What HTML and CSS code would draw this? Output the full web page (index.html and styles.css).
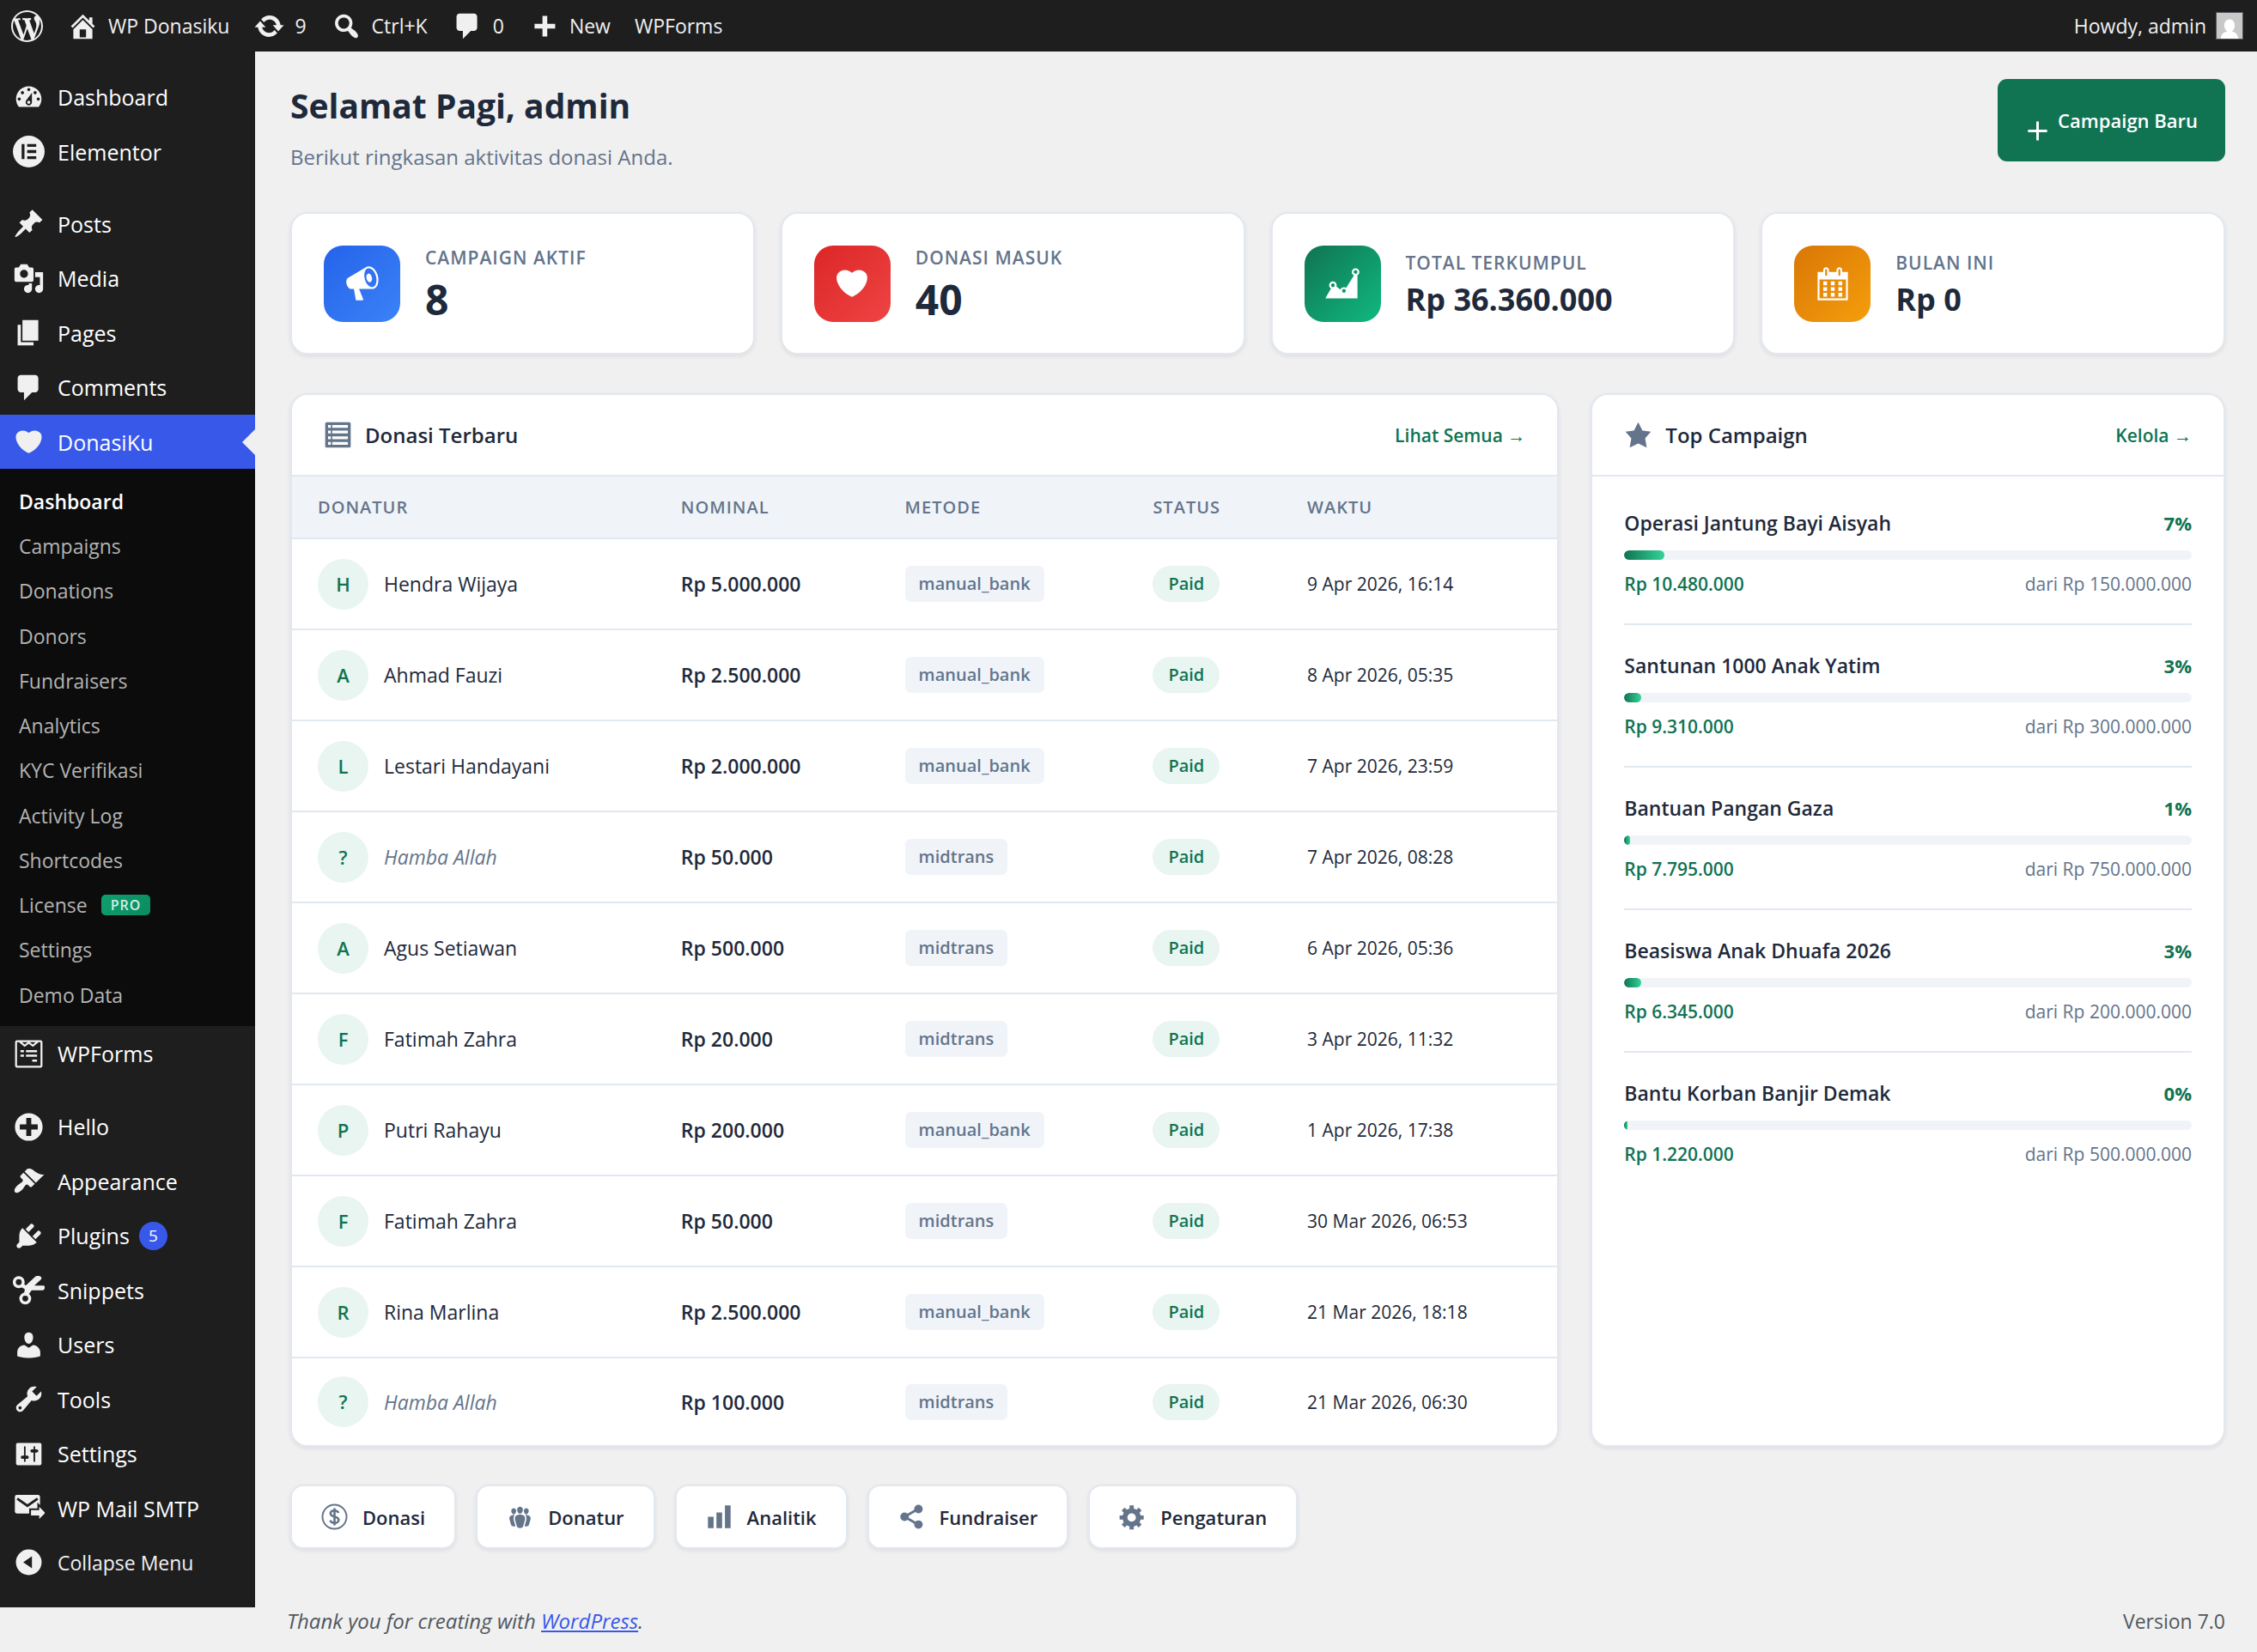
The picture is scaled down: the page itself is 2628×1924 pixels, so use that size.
FILE: index.html
```html
<!DOCTYPE html>
<html lang="id">
<head>
<meta charset="utf-8">
<title>DonasiKu Dashboard</title>
<link rel="stylesheet" href="styles.css">
</head>
<body>

<svg class="sprite" aria-hidden="true">
    <symbol id="i-wordpress" viewBox="0 0 20 20"><path d="M20 10c0-5.51-4.49-10-10-10C4.48 0 0 4.49 0 10c0 5.52 4.48 10 10 10 5.51 0 10-4.48 10-10zM7.78 15.37L4.37 6.22c.55-.02 1.17-.08 1.17-.08.5-.06.44-1.13-.06-1.11 0 0-1.45.11-2.37.11-.18 0-.37 0-.58-.01C4.12 2.69 6.87 1.11 10 1.11c2.33 0 4.45.87 6.05 2.34-.68-.11-1.65.39-1.65 1.58 0 .74.45 1.36.9 2.1.35.61.55 1.36.55 2.46 0 1.49-1.4 5-1.4 5l-3.03-8.37c.54-.02.82-.17.82-.17.5-.05.44-1.25-.06-1.22 0 0-1.44.12-2.38.12-.87 0-2.33-.12-2.33-.12-.5-.03-.56 1.2-.06 1.22l.92.08 1.26 3.41zM17.41 10c.24-.64.74-1.87.43-4.25.7 1.29 1.05 2.71 1.05 4.25 0 3.29-1.73 6.24-4.4 7.78.97-2.59 1.94-5.2 2.92-7.78zM6.1 18.09C3.12 16.65 1.11 13.53 1.11 10c0-1.3.23-2.48.72-3.59C3.25 10.3 4.67 14.2 6.1 18.09zm4.03-6.63l2.58 6.98c-.86.29-1.76.45-2.71.45-.79 0-1.57-.11-2.29-.33.81-2.38 1.62-4.74 2.42-7.1z"/></symbol>
    <symbol id="i-home" viewBox="0 0 20 20"><path d="M16 8.5l1.53 1.53-1.06 1.06L10 4.6l-6.47 6.49-1.06-1.06L10 2.5l4 4v-2h2v4zm-6-2.46l6 5.99V18H4v-5.97zM12 17v-5H8v5h4z"/></symbol>
    <symbol id="i-update" viewBox="0 0 20 20"><path d="M10.2 3.28c3.53 0 6.43 2.61 6.92 6h2.08l-3.5 4-3.5-4h2.32c-.45-1.97-2.21-3.45-4.32-3.45-1.45 0-2.73.71-3.54 1.78L4.95 5.66C6.23 4.2 8.11 3.28 10.2 3.28zm-.4 13.44c-3.52 0-6.43-2.61-6.92-6H.8l3.5-4c1.17 1.33 2.33 2.67 3.5 4H5.48c.45 1.97 2.21 3.45 4.32 3.45 1.45 0 2.73-.71 3.54-1.78l1.71 1.95c-1.28 1.46-3.15 2.38-5.25 2.38z"/></symbol>
    <symbol id="i-search" viewBox="0 0 20 20"><path d="M12.14 4.18c1.87 1.87 2.11 4.75.72 6.89.12.1.22.21.36.31.2.16.47.36.81.59.34.24.56.39.66.47.42.31.73.57.94.78.32.32.6.65.84 1 .25.35.44.69.59 1.04.14.35.21.68.18 1-.02.32-.14.59-.36.81s-.49.34-.81.36c-.31.02-.65-.04-.99-.19-.35-.14-.7-.34-1.04-.59-.35-.24-.68-.52-1-.84-.21-.21-.47-.52-.77-.93-.1-.13-.25-.35-.47-.66-.22-.32-.4-.57-.56-.78-.16-.2-.29-.35-.44-.5-2.07 1.09-4.69.76-6.44-.98-2.14-2.15-2.14-5.64 0-7.78 2.15-2.15 5.63-2.15 7.78 0zm-1.41 6.36c1.36-1.37 1.36-3.58 0-4.95-1.37-1.37-3.59-1.37-4.95 0-1.37 1.37-1.37 3.58 0 4.95 1.36 1.37 3.58 1.37 4.95 0z"/></symbol>
    <symbol id="i-comments" viewBox="0 0 20 20"><path d="M5 2h9c1.1 0 2 .9 2 2v7c0 1.1-.9 2-2 2h-2l-5 5v-5H5c-1.1 0-2-.9-2-2V4c0-1.1.9-2 2-2z"/></symbol>
    <symbol id="i-plus" viewBox="0 0 20 20"><path d="M17 8.500v3h-5v5H9v-5H4v-3h5v-5h3v5h5z"/></symbol>
    <symbol id="i-plus-thin" viewBox="0 0 20 20"><path d="M16 9.200v1.600h-5.200V16H9.200v-5.200H4V9.200h5.200V4h1.600v5.200z"/></symbol>
    <symbol id="i-dashboard" viewBox="0 0 20 20"><path d="M3.76 16h12.48c1.1-1.37 1.76-3.11 1.76-5 0-4.42-3.58-8-8-8s-8 3.58-8 8c0 1.89.66 3.63 1.76 5zM10 4c.55 0 1 .45 1 1s-.45 1-1 1-1-.45-1-1 .45-1 1-1zM6 6c.55 0 1 .45 1 1s-.45 1-1 1-1-.45-1-1 .45-1 1-1zm8 0c.55 0 1 .45 1 1s-.45 1-1 1-1-.45-1-1 .45-1 1-1zm-5.37 5.55L12 7v6c0 1.1-.9 2-2 2s-2-.9-2-2c0-.57.24-1.08.63-1.45zM4 10c.55 0 1 .45 1 1s-.45 1-1 1-1-.45-1-1 .45-1 1-1zm12 0c.55 0 1 .45 1 1s-.45 1-1 1-1-.45-1-1 .45-1 1-1zm-5 3c0-.55-.45-1-1-1s-1 .45-1 1 .45 1 1 1 1-.45 1-1z"/></symbol>
    <symbol id="i-elementor" viewBox="0 0 20 20"><path fill-rule="evenodd" d="M10 0a10 10 0 1 0 0 20 10 10 0 0 0 0-20zM5.5 5.300h1.800v9.400H5.500zM9 5.300h5.700v1.700H9zM9 9.100h5.700v1.800H9zM9 13h5.700v1.700H9z"/></symbol>
    <symbol id="i-post" viewBox="0 0 20 20"><path d="M10.44 3.02l1.82-1.82 6.36 6.35-1.83 1.82c-1.05-.68-2.48-.57-3.41.36l-.75.75c-.92.93-1.04 2.35-.35 3.41l-1.83 1.82-2.41-2.41-2.8 2.79c-.42.42-3.38 2.71-3.8 2.29s1.86-3.39 2.28-3.81l2.79-2.79L4.1 9.36l1.83-1.82c1.05.69 2.48.57 3.4-.36l.75-.75c.93-.92 1.05-2.35.36-3.41z"/></symbol>
    <symbol id="i-media" viewBox="0 0 20 20"><path d="M13 11V4c0-.55-.45-1-1-1h-1.67L9 1H5L3.67 3H2c-.55 0-1 .45-1 1v7c0 .55.45 1 1 1h10c.55 0 1-.45 1-1zM7 4.5c1.38 0 2.5 1.12 2.5 2.5S8.38 9.5 7 9.5 4.5 8.38 4.5 7 5.62 4.5 7 4.5zM14 6h5v10.5c0 1.38-1.12 2.5-2.5 2.5S14 17.88 14 16.5s1.12-2.5 2.5-2.5c.17 0 .34.02.5.05V9h-3V6zm-4 8.05V13h2v3.5c0 1.38-1.12 2.5-2.5 2.5S7 17.88 7 16.5 8.12 14 9.5 14c.17 0 .34.02.5.05z"/></symbol>
    <symbol id="i-page" viewBox="0 0 20 20"><path d="M6 15V2h10v13H6zm-1 1h8v2H3V5h2v11z"/></symbol>
    <symbol id="i-heart" viewBox="0 0 20 20"><path d="M10 17.12c3.33-1.4 5.74-3.79 7.04-6.21 1.28-2.41 1.46-4.81.32-6.25-1.03-1.29-2.37-1.78-3.73-1.74s-2.68.63-3.63 1.46c-.95-.83-2.27-1.42-3.63-1.46s-2.7.45-3.73 1.74c-1.14 1.44-.96 3.84.34 6.25 1.28 2.42 3.69 4.81 7.02 6.21z"/></symbol>
    <symbol id="i-wpforms" viewBox="-1.500 -1.500 23 23"><path fill="none" stroke="currentColor" stroke-width="1.400" d="M1.5.8h17a.7.7 0 0 1 .7.7v17a.7.7 0 0 1-.7.7h-17a.7.7 0 0 1-.7-.7v-17a.7.7 0 0 1 .7-.7zM3.500 1l3.500 3L10 1.800 13 4l3.500-3"/><path d="M4 7.200h2.500v1.500H4zM8 7.200h8v1.500H8zM4 10.500h2.500V12H4zM8 10.500h8V12H8zM12.500 14H16v1.600h-3.500z"/></symbol>
    <symbol id="i-hello" viewBox="-1.500 -1.500 23 23"><path fill-rule="evenodd" d="M10 0a10 10 0 1 0 0 20 10 10 0 0 0 0-20zM8.200 3.500h3.600v4.700h4.700v3.600h-4.700v4.700H8.200v-4.700H3.500V8.200h4.700z"/></symbol>
    <symbol id="i-appearance" viewBox="0 0 20 20"><path d="M14.48 11.06L7.41 3.99l1.5-1.5c.5-.56 2.3-.47 3.51.32 1.21.8 1.43 1.28 2.91 2.1 1.18.64 2.45 1.26 4.45.85zm-.71.71L6.7 4.7 4.93 6.47c-.39.39-.39 1.02 0 1.41l1.06 1.06c.39.39.39 1.03 0 1.42-.6.6-1.43 1.11-2.21 1.69-.35.26-.7.53-1.01.84C1.43 14.23.4 16.08 1.4 17.07c.99 1 2.84-.03 4.18-1.36.31-.31.58-.66.85-1.02.57-.78 1.08-1.61 1.69-2.21.39-.39 1.02-.39 1.41 0l1.06 1.06c.39.39 1.02.39 1.41 0z"/></symbol>
    <symbol id="i-plugins" viewBox="0 0 20 20"><path d="M13.11 4.36L9.87 7.6 8 5.73l3.24-3.24c.35-.34 1.05-.2 1.56.32.52.51.66 1.21.31 1.55zm-8 1.77l.91-1.12 9.01 9.01-1.19.84c-.71.71-2.63 1.16-3.82 1.16H6.14L4.9 17.26c-.59.59-1.54.59-2.12 0-.59-.58-.59-1.53 0-2.12l1.24-1.24v-3.88c0-1.13.4-3.19 1.09-3.89zm7.26 3.97l3.24-3.24c.34-.35 1.04-.21 1.55.31.52.51.66 1.21.31 1.55l-3.24 3.25z"/></symbol>
    <symbol id="i-snippets" viewBox="0 0 20 20"><g fill="none" stroke="currentColor" stroke-width="1.900"><circle cx="3.700" cy="5" r="2.800"/><circle cx="7.800" cy="15.300" r="2.800"/></g><path d="M6.300 6l1.900 1L14 1.600c.7-.6 2.700-.7 3.600 0 .6.500.5 1.300 0 1.800L13.500 7.100h5.600c.8 0 1.100.6 1 1.300-.2 1.200-.7 1.700-1.800 1.700l-6.500.1-2.300 3-2.500-.6.500-3.100-2.500-1.500z"/></symbol>
    <symbol id="i-users" viewBox="0 0 20 20"><path d="M10 9.25c-2.27 0-2.73-3.44-2.73-3.44C7 4.02 7.82 2 9.97 2c2.16 0 2.98 2.02 2.71 3.81 0 0-.41 3.44-2.68 3.44zm0 2.57L12.72 10c2.39 0 4.52 2.33 4.52 4.53v2.49s-3.65 1.13-7.24 1.13c-3.65 0-7.24-1.13-7.24-1.13v-2.49c0-2.25 1.94-4.48 4.47-4.48z"/></symbol>
    <symbol id="i-tools" viewBox="0 0 20 20"><path d="M16.68 9.77c-1.34 1.34-3.3 1.67-4.95.99l-5.41 6.52c-.99.99-2.59.99-3.58 0s-.99-2.59 0-3.57l6.52-5.42c-.68-1.65-.35-3.61.99-4.95 1.28-1.28 3.12-1.62 4.72-1.06l-2.89 2.89 2.82 2.82 2.86-2.87c.53 1.58.18 3.39-1.08 4.65zM3.81 16.21c.4.39 1.04.39 1.43 0 .4-.4.4-1.04 0-1.43-.39-.4-1.03-.4-1.43 0-.39.39-.39 1.03 0 1.43z"/></symbol>
    <symbol id="i-settings" viewBox="0 0 20 20"><path d="M18 16V4c0-.55-.45-1-1-1H3c-.55 0-1 .45-1 1v12c0 .55.45 1 1 1h14c.55 0 1-.45 1-1zM8 11h1c.55 0 1 .45 1 1s-.45 1-1 1H8v1.500c0 .28-.22.5-.5.5s-.5-.22-.5-.5V13H6c-.55 0-1-.45-1-1s.45-1 1-1h1V5.500c0-.28.22-.5.5-.5s.5.22.5.5V11zm5-2h-1c-.55 0-1-.45-1-1s.45-1 1-1h1V5.500c0-.28.22-.5.5-.5s.5.22.5.5V7h1c.55 0 1 .45 1 1s-.45 1-1 1h-1v5.500c0 .28-.22.5-.5.5s-.5-.22-.5-.5V9z"/></symbol>
    <symbol id="i-mail" viewBox="-1.500 0 24 20"><rect width="19" height="14" rx="1.500"/><path fill="none" stroke="#1e1e1e" stroke-width="1.900" d="M1.800 2.800l7.700 5.400 7.700-5.400"/><path stroke="#1e1e1e" stroke-width="1.400" d="M11.500 10.800h6.200V7.300l6.300 6.200-6.300 6.200v-3.500h-6.200z"/></symbol>
    <symbol id="i-collapse" viewBox="-2 -2 24 24"><path fill-rule="evenodd" d="M10 .3a9.700 9.700 0 1 0 0 19.400A9.700 9.700 0 0 0 10 .3zM12.400 5.500v9L5.800 10z"/></symbol>
    <symbol id="i-megaphone" viewBox="0 0 20 20"><path d="M18.15 5.94c.46 1.62.38 3.22-.02 4.48-.42 1.28-1.26 2.18-2.3 2.48-.16.06-.26.06-.4.06-.06.02-.12.02-.18.02-.06.02-.14.02-.22.02h-6.8l2.22 5.5c.02.14-.06.26-.14.34-.08.1-.24.16-.34.16H6.95c-.1 0-.26-.06-.34-.16-.08-.08-.16-.2-.14-.34l-1-5.5H4.25l-.02-.02c-.5.06-1.08-.18-1.54-.62s-.88-1.08-1.06-1.88c-.24-.8-.2-1.56-.02-2.2.18-.62.58-1.08 1.06-1.3l.02-.02 9-5.4c.1-.06.18-.1.24-.16.06-.04.14-.08.24-.12.16-.08.28-.12.5-.18 1.04-.3 2.24.1 3.22.98s1.84 2.24 2.26 3.86zm-2.58 5.98h-.02c.4-.1.74-.34 1.04-.7.58-.7.86-1.76.86-3.04 0-.64-.1-1.3-.28-1.98-.34-1.36-1.02-2.5-1.78-3.24s-1.68-1.1-2.46-.88c-.82.22-1.4.96-1.7 2-.32 1.04-.28 2.36.06 3.72.38 1.36 1 2.5 1.8 3.24.78.74 1.62 1.1 2.48.88zm-2.54-7.08c.22-.04.42-.02.62.04.38.16.76.48 1.02 1s.42 1.2.42 1.78c0 .3-.04.56-.12.8-.18.48-.44.84-.86.94-.34.1-.8-.06-1.14-.4s-.64-.86-.78-1.5c-.18-.62-.12-1.24.02-1.72s.48-.84.82-.94z"/></symbol>
    <symbol id="i-chart-area" viewBox="0 0 20 20"><path d="M18 18l.01-12.28c.59-.35.99-.99.99-1.72 0-1.1-.9-2-2-2s-2 .9-2 2c0 .8.47 1.48 1.14 1.8l-4.13 6.58c-.33-.24-.73-.38-1.16-.38-.84 0-1.55.51-1.85 1.24l-2.14-1.53c.09-.22.14-.46.14-.71 0-1.11-.89-2-2-2-1.1 0-2 .89-2 2 0 .73.4 1.36.98 1.71L1 18h17zM17 3c.55 0 1 .45 1 1s-.45 1-1 1-1-.45-1-1 .45-1 1-1zM5 10c.55 0 1 .45 1 1s-.45 1-1 1-1-.45-1-1 .45-1 1-1zm5.85 3c.55 0 1 .45 1 1s-.45 1-1 1-1-.45-1-1 .45-1 1-1z"/></symbol>
    <symbol id="i-calendar" viewBox="0 0 20 20"><path d="M15 4h3v15H2V4h3V3c0-.41.15-.76.44-1.06.29-.29.65-.44 1.06-.44s.77.15 1.06.44c.29.3.44.65.44 1.06v1h4V3c0-.41.15-.76.44-1.06.29-.29.65-.44 1.06-.44s.77.15 1.06.44c.29.3.44.65.44 1.06v1zM6 3v2.5c0 .14.05.26.15.36.09.09.21.14.35.14s.26-.05.35-.14c.1-.1.15-.22.15-.36V3c0-.14-.05-.26-.15-.35-.09-.1-.21-.15-.35-.15s-.26.05-.35.15c-.1.09-.15.21-.15.35zm7 0v2.5c0 .14.05.26.14.36.1.09.22.14.36.14s.26-.05.36-.14c.09-.1.14-.22.14-.36V3c0-.14-.05-.26-.14-.35-.1-.1-.22-.15-.36-.15s-.26.05-.36.15c-.09.09-.14.21-.14.35zm4 15V8H3v10h14zM7 9v2H5V9h2zm2 0h2v2H9V9zm4 2V9h2v2h-2zm-6 1v2H5v-2h2zm2 0h2v2H9v-2zm4 2v-2h2v2h-2zm-6 1v2H5v-2h2zm4 2H9v-2h2v2zm4 0h-2v-2h2v2z"/></symbol>
    <symbol id="i-list" viewBox="0 0 20 20"><path fill-rule="evenodd" d="M2 19h16c.55 0 1-.45 1-1V2c0-.55-.45-1-1-1H2c-.55 0-1 .45-1 1v16c0 .55.45 1 1 1zM3 3h2v2H3zM6 3h11v2H6zM3 7h2v2H3zM6 7h11v2H6zM3 11h2v2H3zM6 11h11v2H6zM3 15h2v2H3zM6 15h11v2H6z"/></symbol>
    <symbol id="i-star" viewBox="0 0 20 20"><path d="M10 1l3 6 6 .75-4.12 4.62L16 19l-6-3-6 3 1.13-6.63L1 7.750 7 7z"/></symbol>
    <symbol id="i-money" viewBox="0 0 20 20"><g fill="none" stroke="currentColor"><circle cx="10" cy="10" r="8.500" stroke-width="1.200"/><path stroke-width="1.600" d="M12.800 7.300C12.400 6.200 11.300 5.600 10 5.600c-1.700 0-2.800.8-2.800 2.100 0 3 5.700 1.500 5.700 4.500 0 1.300-1.200 2.200-2.900 2.200-1.500 0-2.600-.7-3-1.900M10 4v12"/></g></symbol>
    <symbol id="i-groups" viewBox="0 0 20 20"><path d="M8.03 4.46c-.29 1.28.55 3.46 1.97 3.46 1.41 0 2.25-2.18 1.96-3.46-.22-.98-1.08-1.63-1.96-1.63-.89 0-1.74.65-1.97 1.63zm-4.13.9c-.25 1.08.47 2.93 1.67 2.93s1.92-1.85 1.67-2.93c-.19-.83-.92-1.39-1.67-1.39s-1.48.56-1.67 1.39zm8.86 0c-.25 1.08.47 2.93 1.66 2.93 1.2 0 1.92-1.85 1.67-2.93-.19-.83-.92-1.39-1.67-1.39-.74 0-1.47.56-1.66 1.39zm-.59 11.43l1.25-4.3C14.2 10 12.71 8.47 10 8.47c-2.72 0-4.21 1.53-3.44 4.02l1.26 4.3C8.05 17.51 9 18 10 18c.98 0 1.94-.49 2.17-1.21zm-6.1-7.63c-.49.67-.96 1.83-.42 3.59l1.12 3.79c-.34.2-.77.31-1.2.31-.85 0-1.65-.41-1.85-1.03l-1.07-3.65c-.65-2.11.61-3.4 2.92-3.4.27 0 .54.02.79.06-.1.1-.2.22-.29.33zm8.35-.39c2.31 0 3.58 1.29 2.92 3.4l-1.07 3.65c-.2.62-1 1.03-1.85 1.03-.43 0-.86-.11-1.2-.31l1.11-3.77c.55-1.78.08-2.94-.42-3.61-.08-.11-.18-.23-.28-.33.25-.04.51-.06.79-.06z"/></symbol>
    <symbol id="i-chart-bar" viewBox="0 0 20 20"><path d="M18 18V2h-4v16h4zm-6 0V7H8v11h4zm-6 0v-8H2v8h4z"/></symbol>
    <symbol id="i-share" viewBox="0 0 20 20"><path fill="none" stroke="currentColor" stroke-width="1.800" d="M14.500 4.500L5 10l9.500 5.500"/><circle cx="14.800" cy="4.500" r="3"/><circle cx="5" cy="10" r="3"/><circle cx="14.800" cy="15.500" r="3"/></symbol>
    <symbol id="i-generic" viewBox="0 0 20 20"><path d="M18 12h-2.18c-.17.7-.44 1.35-.81 1.93l1.54 1.54-2.1 2.1-1.54-1.54c-.58.36-1.23.63-1.91.79V19H8v-2.18c-.68-.16-1.33-.43-1.91-.79l-1.54 1.54-2.12-2.12 1.54-1.54c-.36-.58-.63-1.23-.79-1.91H1V9.030h2.17c.16-.7.44-1.35.8-1.94L2.430 5.550l2.1-2.1 1.54 1.54c.58-.37 1.24-.64 1.93-.81V2h3v2.180c.68.16 1.33.43 1.91.79l1.54-1.54 2.12 2.12-1.54 1.54c.36.59.64 1.24.8 1.94H18V12zm-8.500 1.500c1.660 0 3-1.340 3-3s-1.340-3-3-3-3 1.340-3 3 1.340 3 3 3z"/></symbol>
</svg>

<header class="adminbar">
    <a class="ab-logo" href="#" aria-label="About WordPress"><svg class="icon"><use href="#i-wordpress"/></svg></a>
    <a class="ab-home" href="#"><svg class="icon"><use href="#i-home"/></svg>WP Donasiku</a>
    <a class="ab-update" href="#"><svg class="icon"><use href="#i-update"/></svg>9</a>
    <a class="ab-search" href="#"><svg class="icon"><use href="#i-search"/></svg>Ctrl+K</a>
    <a class="ab-comments" href="#"><svg class="icon"><use href="#i-comments"/></svg>0</a>
    <a class="ab-new" href="#"><svg class="icon"><use href="#i-plus"/></svg>New</a>
    <a class="ab-forms" href="#">WPForms</a>
    <a class="ab-account" href="#">Howdy, admin
        <svg class="avatar" viewBox="0 0 32 32"><path fill="#c8c8c8" d="M0 0h32v32H0z"/><path fill="#fff" d="M16 8c4 0 6.500 3 6.500 7.500 0 3.500-1.500 6-3.500 7.500 4 1 7 3 8 9H5c1-6 4-8 8-9-2-1.500-3.500-4-3.500-7.500C9.500 11 12 8 16 8z"/></svg>
    </a>
</header>

<div class="layout">
    <nav class="sidebar">
        <ul class="menu">
            <li><a href="#"><svg class="icon"><use href="#i-dashboard"/></svg>Dashboard</a></li>
            <li><a href="#"><svg class="icon"><use href="#i-elementor"/></svg>Elementor</a></li>
            <li class="separator"></li>
            <li><a href="#"><svg class="icon"><use href="#i-post"/></svg>Posts</a></li>
            <li><a href="#"><svg class="icon"><use href="#i-media"/></svg>Media</a></li>
            <li><a href="#"><svg class="icon"><use href="#i-page"/></svg>Pages</a></li>
            <li><a href="#"><svg class="icon"><use href="#i-comments"/></svg>Comments</a></li>
            <li class="current">
                <a href="#"><svg class="icon"><use href="#i-heart"/></svg>DonasiKu</a>
                <ul class="submenu">
                    <li><a class="active" href="#">Dashboard</a></li>
                    <li><a href="#">Campaigns</a></li>
                    <li><a href="#">Donations</a></li>
                    <li><a href="#">Donors</a></li>
                    <li><a href="#">Fundraisers</a></li>
                    <li><a href="#">Analytics</a></li>
                    <li><a href="#">KYC Verifikasi</a></li>
                    <li><a href="#">Activity Log</a></li>
                    <li><a href="#">Shortcodes</a></li>
                    <li><a href="#">License <span class="pro">PRO</span></a></li>
                    <li><a href="#">Settings</a></li>
                    <li><a href="#">Demo Data</a></li>
                </ul>
            </li>
            <li><a href="#"><svg class="icon"><use href="#i-wpforms"/></svg>WPForms</a></li>
            <li class="separator"></li>
            <li><a href="#"><svg class="icon"><use href="#i-hello"/></svg>Hello</a></li>
            <li><a href="#"><svg class="icon"><use href="#i-appearance"/></svg>Appearance</a></li>
            <li><a href="#"><svg class="icon"><use href="#i-plugins"/></svg>Plugins <span class="count">5</span></a></li>
            <li><a href="#"><svg class="icon"><use href="#i-snippets"/></svg>Snippets</a></li>
            <li><a href="#"><svg class="icon"><use href="#i-users"/></svg>Users</a></li>
            <li><a href="#"><svg class="icon"><use href="#i-tools"/></svg>Tools</a></li>
            <li><a href="#"><svg class="icon"><use href="#i-settings"/></svg>Settings</a></li>
            <li><a href="#"><svg class="icon"><use href="#i-mail"/></svg>WP Mail SMTP</a></li>
            <li><button class="collapse" type="button"><svg class="icon"><use href="#i-collapse"/></svg>Collapse Menu</button></li>
        </ul>
    </nav>

    <div class="content">
        <main class="wrap">
            <div class="page-head">
                <div>
                    <h1>Selamat Pagi, admin</h1>
                    <p>Berikut ringkasan aktivitas donasi Anda.</p>
                </div>
                <a class="btn-new" href="#"><svg class="icon"><use href="#i-plus-thin"/></svg>Campaign Baru</a>
            </div>

            <div class="stats">
                <div class="stat">
                    <div class="stat-icon blue"><svg class="icon"><use href="#i-megaphone"/></svg></div>
                    <div><div class="stat-label">Campaign Aktif</div><div class="stat-value">8</div></div>
                </div>
                <div class="stat">
                    <div class="stat-icon red"><svg class="icon"><use href="#i-heart"/></svg></div>
                    <div><div class="stat-label">Donasi Masuk</div><div class="stat-value">40</div></div>
                </div>
                <div class="stat">
                    <div class="stat-icon green"><svg class="icon"><use href="#i-chart-area"/></svg></div>
                    <div><div class="stat-label">Total Terkumpul</div><div class="stat-value money">Rp 36.360.000</div></div>
                </div>
                <div class="stat">
                    <div class="stat-icon orange"><svg class="icon"><use href="#i-calendar"/></svg></div>
                    <div><div class="stat-label">Bulan Ini</div><div class="stat-value money">Rp 0</div></div>
                </div>
            </div>

            <div class="panels">
                <section class="panel">
                    <div class="panel-head">
                        <h2><svg class="icon"><use href="#i-list"/></svg>Donasi Terbaru</h2>
                        <a href="#">Lihat Semua →</a>
                    </div>
                    <table>
                        <thead>
                            <tr><th class="c-name">Donatur</th><th class="c-amount">Nominal</th><th class="c-method">Metode</th><th class="c-status">Status</th><th>Waktu</th></tr>
                        </thead>
                        <tbody>
                            <tr><td><div class="donor"><span class="initial">H</span>Hendra Wijaya</div></td><td class="amount">Rp 5.000.000</td><td><span class="method">manual_bank</span></td><td><span class="paid">Paid</span></td><td class="date">9 Apr 2026, 16:14</td></tr>
                            <tr><td><div class="donor"><span class="initial">A</span>Ahmad Fauzi</div></td><td class="amount">Rp 2.500.000</td><td><span class="method">manual_bank</span></td><td><span class="paid">Paid</span></td><td class="date">8 Apr 2026, 05:35</td></tr>
                            <tr><td><div class="donor"><span class="initial">L</span>Lestari Handayani</div></td><td class="amount">Rp 2.000.000</td><td><span class="method">manual_bank</span></td><td><span class="paid">Paid</span></td><td class="date">7 Apr 2026, 23:59</td></tr>
                            <tr><td><div class="donor"><span class="initial">?</span><em>Hamba Allah</em></div></td><td class="amount">Rp 50.000</td><td><span class="method">midtrans</span></td><td><span class="paid">Paid</span></td><td class="date">7 Apr 2026, 08:28</td></tr>
                            <tr><td><div class="donor"><span class="initial">A</span>Agus Setiawan</div></td><td class="amount">Rp 500.000</td><td><span class="method">midtrans</span></td><td><span class="paid">Paid</span></td><td class="date">6 Apr 2026, 05:36</td></tr>
                            <tr><td><div class="donor"><span class="initial">F</span>Fatimah Zahra</div></td><td class="amount">Rp 20.000</td><td><span class="method">midtrans</span></td><td><span class="paid">Paid</span></td><td class="date">3 Apr 2026, 11:32</td></tr>
                            <tr><td><div class="donor"><span class="initial">P</span>Putri Rahayu</div></td><td class="amount">Rp 200.000</td><td><span class="method">manual_bank</span></td><td><span class="paid">Paid</span></td><td class="date">1 Apr 2026, 17:38</td></tr>
                            <tr><td><div class="donor"><span class="initial">F</span>Fatimah Zahra</div></td><td class="amount">Rp 50.000</td><td><span class="method">midtrans</span></td><td><span class="paid">Paid</span></td><td class="date">30 Mar 2026, 06:53</td></tr>
                            <tr><td><div class="donor"><span class="initial">R</span>Rina Marlina</div></td><td class="amount">Rp 2.500.000</td><td><span class="method">manual_bank</span></td><td><span class="paid">Paid</span></td><td class="date">21 Mar 2026, 18:18</td></tr>
                            <tr><td><div class="donor"><span class="initial">?</span><em>Hamba Allah</em></div></td><td class="amount">Rp 100.000</td><td><span class="method">midtrans</span></td><td><span class="paid">Paid</span></td><td class="date">21 Mar 2026, 06:30</td></tr>
                        </tbody>
                    </table>
                </section>

                <section class="panel">
                    <div class="panel-head">
                        <h2><svg class="icon"><use href="#i-star"/></svg>Top Campaign</h2>
                        <a href="#">Kelola →</a>
                    </div>
                    <ul class="campaigns">
                        <li>
                            <div class="row title"><span>Operasi Jantung Bayi Aisyah</span><b>7%</b></div>
                            <div class="bar"><div class="fill" style="width: 7%"></div></div>
                            <div class="row meta"><span class="raised">Rp 10.480.000</span><span>dari Rp 150.000.000</span></div>
                        </li>
                        <li>
                            <div class="row title"><span>Santunan 1000 Anak Yatim</span><b>3%</b></div>
                            <div class="bar"><div class="fill" style="width: 3%"></div></div>
                            <div class="row meta"><span class="raised">Rp 9.310.000</span><span>dari Rp 300.000.000</span></div>
                        </li>
                        <li>
                            <div class="row title"><span>Bantuan Pangan Gaza</span><b>1%</b></div>
                            <div class="bar"><div class="fill" style="width: 1%"></div></div>
                            <div class="row meta"><span class="raised">Rp 7.795.000</span><span>dari Rp 750.000.000</span></div>
                        </li>
                        <li>
                            <div class="row title"><span>Beasiswa Anak Dhuafa 2026</span><b>3%</b></div>
                            <div class="bar"><div class="fill" style="width: 3%"></div></div>
                            <div class="row meta"><span class="raised">Rp 6.345.000</span><span>dari Rp 200.000.000</span></div>
                        </li>
                        <li>
                            <div class="row title"><span>Bantu Korban Banjir Demak</span><b>0%</b></div>
                            <div class="bar"><div class="fill" style="width: 0.5%"></div></div>
                            <div class="row meta"><span class="raised">Rp 1.220.000</span><span>dari Rp 500.000.000</span></div>
                        </li>
                    </ul>
                </section>
            </div>

            <div class="quick">
                <a href="#"><svg class="icon"><use href="#i-money"/></svg>Donasi</a>
                <a href="#"><svg class="icon"><use href="#i-groups"/></svg>Donatur</a>
                <a href="#"><svg class="icon"><use href="#i-chart-bar"/></svg>Analitik</a>
                <a href="#"><svg class="icon"><use href="#i-share"/></svg>Fundraiser</a>
                <a href="#"><svg class="icon"><use href="#i-generic"/></svg>Pengaturan</a>
            </div>
        </main>

        <footer>
            <em>Thank you for creating with <a href="#">WordPress</a>.</em>
            <span>Version 7.0</span>
        </footer>
    </div>
</div>

</body>
</html>
```

FILE: styles.css
```css
* {
    box-sizing: border-box;
}

body {
    margin: 0;
    background: #f0f0f0;
    color: #1e293b;
    font-family: "Open Sans", "Noto Sans", sans-serif;
    font-size: 24px;
    line-height: 32px;
}

a {
    color: inherit;
    text-decoration: none;
}

ul {
    list-style: none;
    margin: 0;
    padding: 0;
}

.sprite {
    display: none;
}

.icon {
    width: 37px;
    height: 37px;
    flex: none;
    fill: currentColor;
}

/* admin bar */
.adminbar {
    display: flex;
    align-items: center;
    gap: 28px;
    height: 60px;
    padding: 0 16px 0 13px;
    background: #1e1e1e;
    color: #f0f0f1;
    font-size: 23px;
}

.adminbar a {
    display: flex;
    align-items: center;
    gap: 11px;
}

.ab-account {
    margin-left: auto;
}

.avatar {
    width: 32px;
    height: 32px;
    border: 1px solid #50575e;
}

/* sidebar */
.layout {
    display: flex;
    align-items: flex-start;
}

.sidebar {
    width: 297px;
    flex: none;
    padding: 21px 0;
    background: #1e1e1e;
}

.menu > li > a,
.collapse {
    display: flex;
    align-items: center;
    gap: 15px;
    height: 63px;
    padding: 0 15px;
    color: #fff;
    font-size: 25px;
}

.menu > li:nth-child(odd) > a {
    height: 64px;
}

.menu .icon {
    color: #f0f0f1;
}

.menu .separator {
    height: 21px;
}

.menu .collapse {
    width: 100%;
    border: 0;
    background: none;
    color: #f0f0f1;
    font-family: inherit;
    font-size: 23px;
    cursor: pointer;
}

.menu > .current > a {
    position: relative;
    background: #3858e9;
}

.current > a::after {
    content: "";
    position: absolute;
    right: 0;
    top: 17px;
    border: 15px solid transparent;
    border-right-color: #f0f0f0;
    border-left: 0;
}

.submenu {
    padding: 12px 0 10px;
    background: #0c0c0c;
}

.submenu a {
    display: flex;
    align-items: center;
    height: 52px;
    padding-left: 22px;
    color: #b4b4b4;
    font-size: 23px;
}

.submenu li:nth-child(4n) a {
    height: 53px;
}

.submenu .active {
    color: #fff;
    font-weight: 600;
}

.pro {
    margin-left: 16px;
    padding: 0 11px;
    border-radius: 5px;
    background: linear-gradient(135deg, #0f9f6e, #0b8a60);
    color: #d5efe5;
    font-size: 16px;
    font-weight: 600;
    line-height: 24px;
    letter-spacing: 1px;
}

.count {
    width: 33px;
    margin-left: -4px;
    border-radius: 17px;
    background: #3858e9;
    font-size: 19px;
    line-height: 33px;
    text-align: center;
}

/* page */
.content {
    flex: 1;
    padding: 32px 37px 0;
}

.wrap {
    margin-left: 4px;
}

.page-head {
    display: flex;
    justify-content: space-between;
    align-items: flex-start;
    height: 155px;
}

h1 {
    margin: 3px 0 16px;
    font-size: 39px;
    font-weight: 700;
    line-height: 56px;
}

.page-head p {
    margin: 0;
    color: #64748b;
    font-size: 24px;
}

.btn-new {
    display: flex;
    align-items: center;
    height: 96px;
    padding: 0 32px 0 28px;
    gap: 5px;
    border-radius: 11px;
    background: #107352;
    color: #fff;
    font-size: 22px;
    font-weight: 600;
}

.btn-new .icon {
    margin-top: 24px;
}

.stats {
    display: grid;
    grid-template-columns: repeat(4, 1fr);
    gap: 30px;
}

.stat,
.panel,
.quick a {
    border: 2px solid #e2e8f0;
    border-radius: 20px;
    background: #fff;
    box-shadow: 0 2px 5px rgba(0, 0, 0, 0.08);
}

.stat {
    display: flex;
    align-items: center;
    gap: 29px;
    height: 166px;
    padding: 0 37px;
}

.stat-icon {
    display: flex;
    align-items: center;
    justify-content: center;
    width: 89px;
    height: 89px;
    border-radius: 22px;
    color: #fff;
}

.stat-icon .icon {
    width: 44px;
    height: 44px;
}

.blue { background: linear-gradient(135deg, #2563eb, #3b82f6); }
.red { background: linear-gradient(135deg, #dc2626, #ef4444); }
.green { background: linear-gradient(135deg, #107352, #10b981); }
.orange { background: linear-gradient(135deg, #d97706, #f59e0b); }

.stat-label {
    margin-bottom: 4px;
    color: #64748b;
    font-size: 21px;
    font-weight: 600;
    line-height: 34px;
    letter-spacing: 1px;
    text-transform: uppercase;
}

.stat-value {
    font-size: 48px;
    font-weight: 700;
    line-height: 56px;
}

.stat-value.money {
    font-size: 36px;
    line-height: 44px;
}

/* panels */
.panels {
    display: grid;
    grid-template-columns: 2fr 1fr;
    gap: 37px;
    margin: 45px 0 44px;
}

.panel {
    overflow: hidden;
}

.panel-head {
    display: flex;
    align-items: center;
    justify-content: space-between;
    height: 95px;
    padding: 0 37px;
    border-bottom: 2px solid #e2e8f0;
}

.panel-head h2 {
    display: flex;
    align-items: center;
    gap: 15px;
    margin: 0;
    font-size: 24px;
    font-weight: 600;
}

.panel-head .icon {
    width: 33px;
    height: 33px;
    color: #64748b;
}

.panel-head a {
    color: #107352;
    font-size: 21px;
    font-weight: 600;
}

table {
    width: 100%;
    border-collapse: collapse;
    table-layout: fixed;
}

th,
td {
    padding: 0 0 0 30px;
    border-bottom: 2px solid #e2e8f0;
    text-align: left;
}

th {
    height: 72px;
    background: #f0f4f9;
    color: #64748b;
    font-size: 20px;
    font-weight: 600;
    letter-spacing: 1px;
    text-transform: uppercase;
}

td {
    height: 106px;
}

tr:last-child td {
    height: 102px;
    border-bottom: 0;
}

.c-name { width: 28.7%; }
.c-amount { width: 17.7%; }
.c-method { width: 19.6%; }
.c-status { width: 12.2%; }

.donor {
    display: flex;
    align-items: center;
    gap: 18px;
    font-size: 23px;
}

.donor em {
    color: #64748b;
}

.initial {
    width: 59px;
    border-radius: 50%;
    background: #e8f5f0;
    color: #107352;
    font-size: 22px;
    font-weight: 600;
    line-height: 59px;
    text-align: center;
}

.amount {
    font-size: 23px;
    font-weight: 600;
}

.method,
.paid {
    display: inline-block;
    padding: 0 16px;
    border-radius: 7px;
    background: #f0f4f9;
    color: #64748b;
    font-size: 20px;
    font-weight: 600;
    line-height: 42px;
}

.paid {
    padding: 0 18px;
    border-radius: 21px;
    background: #e8f5f0;
    color: #107352;
}

.date {
    font-size: 21px;
}

.campaigns {
    padding: 38px 37px;
}

.campaigns li {
    padding-bottom: 30px;
    margin-bottom: 31px;
    border-bottom: 2px solid #e2e8f0;
}

.campaigns li:last-child {
    border-bottom: 0;
    margin-bottom: 0;
    padding-bottom: 0;
}

.row {
    display: flex;
    justify-content: space-between;
}

.title {
    font-size: 23px;
    font-weight: 600;
}

.title b {
    color: #107352;
    font-size: 22px;
    font-weight: 700;
}

.bar {
    height: 11px;
    margin: 16px 0 12px;
    border-radius: 6px;
    background: #f0f4f9;
    overflow: hidden;
}

.fill {
    height: 100%;
    border-radius: 6px;
    background: linear-gradient(90deg, #107352, #34d399);
}

.meta {
    color: #64748b;
    font-size: 21px;
}

.raised {
    color: #107352;
    font-weight: 600;
}

.quick {
    display: flex;
    gap: 23px;
}

.quick a {
    display: flex;
    align-items: center;
    gap: 16px;
    height: 75px;
    padding: 0 34px 0 33px;
    border-radius: 15px;
    font-size: 22px;
    font-weight: 600;
}

.quick .icon {
    width: 33px;
    height: 33px;
    color: #64748b;
}

footer {
    display: flex;
    justify-content: space-between;
    margin-top: 68px;
    color: #50575e;
}

footer span {
    font-size: 23px;
}

footer a {
    color: #3858e9;
    text-decoration: underline;
}
```
